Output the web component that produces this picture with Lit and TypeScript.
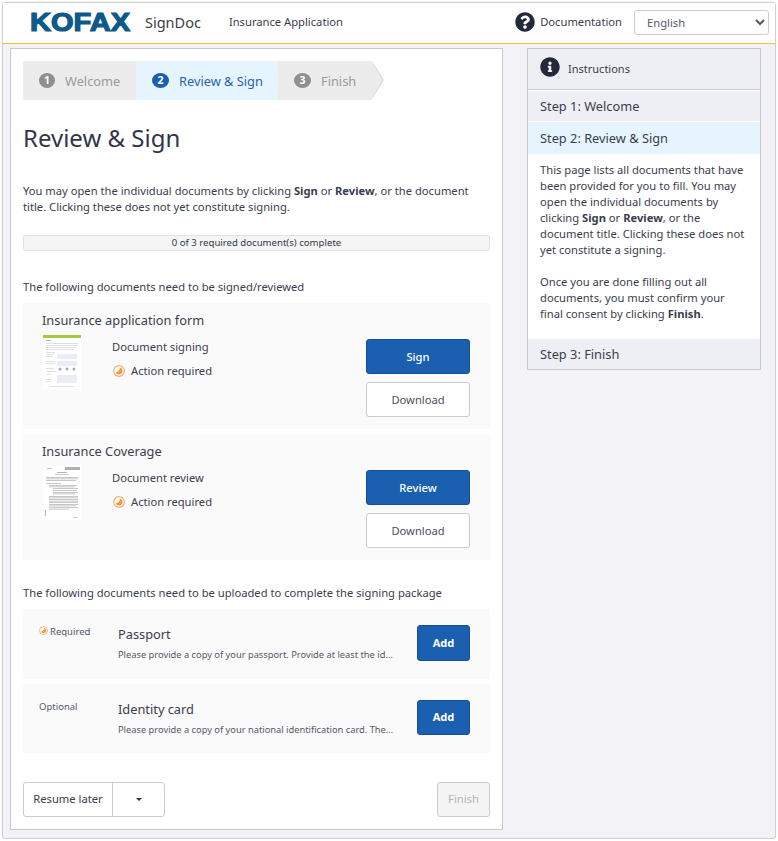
import { LitElement, html, css, svg } from "lit";
import { customElement } from "lit/decorators.js";

const QUESTION = "M504 256c0 136.997-111.043 248-248 248S8 392.997 8 256C8 119.083 119.043 8 256 8s248 111.083 248 248zM262.655 90c-54.497 0-89.255 22.957-116.549 63.758-3.536 5.286-2.353 12.415 2.715 16.258l34.699 26.31c5.205 3.947 12.621 3.008 16.665-2.122 17.864-22.658 30.113-35.797 57.303-35.797 20.429 0 45.698 13.148 45.698 32.958 0 14.976-12.363 22.667-32.534 33.976C247.128 238.528 216 254.941 216 296v4c0 6.627 5.373 12 12 12h56c6.627 0 12-5.373 12-12v-1.333c0-28.462 83.186-29.647 83.186-106.667 0-58.002-60.165-102-116.531-102zM256 338c-25.365 0-46 20.635-46 46 0 25.364 20.635 46 46 46s46-20.636 46-46c0-25.365-20.635-46-46-46z";
const INFO = "M256 8C119.043 8 8 119.083 8 256c0 136.997 111.043 248 248 248s248-111.003 248-248C504 119.083 392.957 8 256 8zm0 110c23.196 0 42 18.804 42 42s-18.804 42-42 42-42-18.804-42-42 18.804-42 42-42zm56 254c0 6.627-5.373 12-12 12h-88c-6.627 0-12-5.373-12-12v-24c0-6.627 5.373-12 12-12h12v-64h-12c-6.627 0-12-5.373-12-12v-24c0-6.627 5.373-12 12-12h64c6.627 0 12 5.373 12 12v100h12c6.627 0 12 5.373 12 12v24z";

const clock = (size: number) => html`<svg width=${size} height=${size} viewBox="0 0 12 12">
  <circle cx="6" cy="6" r="5.3" fill="#fff" stroke="#f9ab78" stroke-width="1.2"></circle>
  <path d="M6.6 2.6 A3.5 3.5 0 1 1 2.7 7.2 A4 4 0 0 0 6.6 4.8 Z" fill="#f29c33"></path>
</svg>`;

const lines = (rows: number[][], fill: string) =>
  rows.map(([x, y, w, h]) => svg`<rect x=${x} y=${y} width=${w} height=${h ?? 0.7} fill=${fill}></rect>`);

const thumbForm = html`<svg class="thumb" width="38" height="54" viewBox="0 0 38 54">
  <rect width="38" height="54" fill="#fff"></rect>
  <rect width="38" height="3" fill="#a6c83c"></rect>
  <rect x="3" y="5" width="5" height="1" fill="#9db9dc"></rect>
  ${lines([[3,8,32,.7],[3,10,32,.7],[3,12,30,.7],[3,14,28,.7],[3,17,9,.7],[3,19,8,.7],[3,21,7,.7],[3,26,9,.7],[3,28,9,.7],[3,33,8,.7],[3,36,10,.7],[3,39,5,.7],[3,44,5,.7],[3,46,4,.7]], "#d0d3d8")}
  ${lines([[14,19,20,5],[14,26,20,5],[14,40,20,4],[14,44,20,4]], "#e9eef6")}
  <circle cx="17" cy="34" r="1.5" fill="#a5aab0"></circle>
  <circle cx="24" cy="34" r="1.5" fill="#a5aab0"></circle>
  <circle cx="31" cy="34" r="1.5" fill="#a5aab0"></circle>
  <rect x="7" y="51" width="24" height=".7" fill="#d5dae0"></rect>
</svg>`;

const thumbDoc = html`<svg class="thumb" width="38" height="54" viewBox="0 0 38 54">
  <rect width="38" height="54" fill="#fff"></rect>
  <rect x="22" y="1" width="15" height="3" fill="#b0b0b0"></rect>
  <rect x="4" y="2" width="5" height=".7" fill="#aaa"></rect>
  <rect x="14" y="6" width="10" height=".7" fill="#999"></rect>
  <rect x="12" y="8" width="14" height=".7" fill="#bbb"></rect>
  ${lines([[3,11,32,.6],[3,12.6,32,.6],[3,14.2,30,.6],[3,17,15,.6],[6,19,28,.6],[6,20.6,26,.6],[10,22.4,25,.6],[10,24,24,.6],[10,26,25,.6],[10,27.6,22,.6],[6,30,29,.6],[6,31.6,29,.6],[6,33.2,29,.6],[6,34.8,29,.6],[6,36.4,29,.6],[6,38,29,.6],[6,39.6,27,.6],[6,41.2,29,.6],[6,42.8,20,.6],[2,44,.8,6],[30,51,4,.6]], "#a2a2a2")}
</svg>`;

@customElement("app-root")
export class AppRoot extends LitElement {
  static styles = css`
    :host { display: block; font-family: "Noto Sans", sans-serif; color: #3a3d4e; font-size: 11.2px; line-height: 16px; }
    * { box-sizing: border-box; }
    .frame { margin: 2px 2px 0 2px; width: 774px; height: 837px; background: #f2f2f7; border: 1px solid #cfcfd4; border-radius: 3px; box-shadow: 0 0 2px rgba(0,0,0,.1); }
    header { height: 41px; background: #fff; border-bottom: 1px solid #f4c02f; display: flex; align-items: center; padding: 0 6px 2px 26px; }
    .logo { display: block; width: 102px; height: 20px; }
    .logo text { font: 900 25px "Liberation Sans", sans-serif; fill: #0d5a8a; stroke: #0d5a8a; stroke-width: 1.2; }
    .brand { font-size: 14.5px; margin-left: 14px; color: #3b3d4a; }
    .app { margin-left: 28px; font-size: 11.2px; }
    .spacer { flex: 1; }
    .doc { display: flex; align-items: center; gap: 5px; font-size: 11.2px; margin-right: 12px; }
    .doc svg, .side-head svg { display: block; fill: #22293a; }
    select { width: 135px; height: 25px; padding-left: 8px; font: 11.2px "Noto Sans", sans-serif; color: #55596a; background: #fff; border: 1px solid #ccc; border-radius: 3px; }
    .body { display: flex; align-items: flex-start; padding: 4px 0 0 7px; }
    main { width: 493px; height: 782px; background: #fff; border: 1px solid #c8c8cc; padding: 12px; display: flex; flex-direction: column; }
    .steps { display: flex; width: 360px; height: 39px; }
    .step { display: flex; align-items: center; height: 39px; background: #ececec; color: #9a9a9a; font-size: 12.8px; padding-left: 16px; position: relative; }
    .step.one { width: 113px; }
    .step.one .num { width: 16px; }
    .step.two { width: 142px; background: #e6f5fd; color: #2a62ad; }
    .step.three { width: 94px; }
    .step.three::before { content: ""; position: absolute; left: 94px; top: 0; width: 0; height: 0; border-left: 12px solid #dcdcdc; border-top: 19.5px solid transparent; border-bottom: 19.5px solid transparent; }
    .step.three::after { content: ""; position: absolute; left: 94px; top: 1px; width: 0; height: 0; border-left: 10.5px solid #ececec; border-top: 18.5px solid transparent; border-bottom: 18.5px solid transparent; }
    .num { width: 17px; height: 15px; border-radius: 50%; background: #8f8f8f; color: #fff; font-size: 10.5px; font-weight: 700; line-height: 15px; text-align: center; margin-right: 10px; }
    .two .num { background: #1a5fb0; }
    h1 { margin: 19px 0 0; font-size: 24px; font-weight: 400; line-height: 38px; color: #33364a; }
    .intro { margin: 26px 0 0; font-size: 11.2px; line-height: 16px; }
    b { font-weight: 700; }
    .progress { height: 16px; flex: none; margin-top: 20px; background: #f5f5f5; border: 1px solid #e3e3e3; border-radius: 2px; text-align: center; font-size: 9.6px; line-height: 14px; color: #33364a; }
    .label { margin: 28px 0 0; font-size: 11.2px; line-height: 16px; }
    .card + .label { margin-top: 25px; }
    .card { background: #fafafa; height: 126px; flex: none; padding: 8px 20px 0 19px; margin-top: 5px; }
    .label + .card { margin-top: 8px; }
    .card h3 { margin: 0; font-size: 12.8px; font-weight: 400; line-height: 18px; color: #3a3d4e; }
    .card-row { display: flex; margin-top: 6px; }
    .thumb { display: block; flex: none; margin-left: 1px; }
    .meta { margin-left: 31px; flex: 1; font-size: 11.2px; line-height: 16px; padding-top: 4px; }
    .action { display: flex; align-items: center; gap: 6px; margin-top: 8px; padding-left: 1px; }
    .action svg { display: block; }
    .actions { display: flex; flex-direction: column; gap: 8px; width: 104px; margin-top: 4px; }
    .btn { height: 35px; flex: none; border-radius: 3px; font: 11.2px "Noto Sans", sans-serif; display: flex; align-items: center; justify-content: center; }
    .primary { background: #1a5fb0; border: 1px solid #154f93; color: #fff; font-weight: 500; }
    .plain { background: #fff; border: 1px solid #ccc; color: #4b4e5c; }
    .upload { background: #fafafa; height: 70px; flex: none; margin-top: 5px; display: flex; padding: 16px 20px 0 16px; }
    .label + .upload { margin-top: 8px; }
    .upload.second { height: 69px; }
    .req { width: 79px; flex: none; display: flex; align-items: flex-start; gap: 2px; font-size: 9.5px; line-height: 14px; color: #55586a; }
    .req svg { margin-top: 1px; }
    .upload-text { width: 276px; flex: none; }
    .upload-text h4 { margin: 0; font-size: 12.8px; font-weight: 400; line-height: 18px; }
    .upload-text p { margin: 5px 0 0; font-size: 9.3px; line-height: 14px; white-space: nowrap; overflow: hidden; text-overflow: ellipsis; color: #55586a; }
    .add { width: 53px; height: 36px; margin-left: auto; font-weight: 700; font-size: 11px; padding-bottom: 2px; }
    .second .add { height: 35px; }
    .foot { display: flex; justify-content: space-between; margin-top: 29px; }
    .split { display: flex; width: 142px; height: 35px; border: 1px solid #ccc; border-radius: 3px; font-size: 11.2px; }
    .split span { display: flex; align-items: center; justify-content: center; }
    .split .txt { width: 89px; border-right: 1px solid #ccc; padding-bottom: 2px; }
    .split .caret { flex: 1; }
    .caret::after { content: ""; border-top: 3px solid #333; border-left: 3px solid transparent; border-right: 3px solid transparent; }
    .finish { width: 53px; background: #f4f4f4; border: 1px solid #ccc; color: #b5b5b5; padding-bottom: 2px; }
    aside { margin-left: 24px; width: 234px; background: #fff; border: 1px solid #c8c8cc; }
    .side-head { height: 41px; background: #eeeff4; display: flex; align-items: center; gap: 8px; padding: 0 12px; font-size: 11px; border-bottom: 1px solid #c9c9ce; }
    .side-head svg { margin-top: -4px; }
    .side-step { height: 30px; background: #eeeff4; display: flex; align-items: center; padding: 0 12px; font-size: 12.8px; color: #3a3d4e; }
    .side-step.first { margin-top: 1px; }
    .side-step.active { background: #e6f5fd; height: 32px; margin-top: 1px; }
    .side-body { padding: 8px 12px 10px; height: 185px; font-size: 11.2px; line-height: 16px; }
    .side-body p { margin: 0 0 16px; }
  `;

  render() {
    return html`<div class="frame">
      <header>
        <svg class="logo" viewBox="0 0 102 20" aria-label="KOFAX"><text x="1" y="18.5" textLength="100" lengthAdjust="spacingAndGlyphs">KOFAX</text></svg>
        <span class="brand">SignDoc</span>
        <span class="app">Insurance Application</span>
        <span class="spacer"></span>
        <span class="doc"><svg width="20" height="20" viewBox="0 0 512 512"><path d=${QUESTION}></path></svg>Documentation</span>
        <select><option>English</option></select>
      </header>
      <div class="body">
        <main>
          <div class="steps">
            <div class="step one"><span class="num">1</span>Welcome</div>
            <div class="step two"><span class="num">2</span>Review &amp; Sign</div>
            <div class="step three"><span class="num">3</span>Finish</div>
          </div>
          <h1>Review &amp; Sign</h1>
          <p class="intro">You may open the individual documents by clicking <b>Sign</b> or <b>Review</b>, or the document title. Clicking these does not yet constitute signing.</p>
          <div class="progress">0 of 3 required document(s) complete</div>
          <p class="label">The following documents need to be signed/reviewed</p>
          <section class="card">
            <h3>Insurance application form</h3>
            <div class="card-row">
              ${thumbForm}
              <div class="meta">Document signing<div class="action">${clock(12)}Action required</div></div>
              <div class="actions"><div class="btn primary">Sign</div><div class="btn plain">Download</div></div>
            </div>
          </section>
          <section class="card">
            <h3>Insurance Coverage</h3>
            <div class="card-row">
              ${thumbDoc}
              <div class="meta">Document review<div class="action">${clock(12)}Action required</div></div>
              <div class="actions"><div class="btn primary">Review</div><div class="btn plain">Download</div></div>
            </div>
          </section>
          <p class="label">The following documents need to be uploaded to complete the signing package</p>
          <section class="upload">
            <div class="req">${clock(9)}Required</div>
            <div class="upload-text"><h4>Passport</h4><p>Please provide a copy of your passport. Provide at least the identification page and the page with the photo</p></div>
            <div class="btn primary add">Add</div>
          </section>
          <section class="upload second">
            <div class="req">Optional</div>
            <div class="upload-text"><h4>Identity card</h4><p>Please provide a copy of your national identification card. The copy must show both the front and the back</p></div>
            <div class="btn primary add">Add</div>
          </section>
          <div class="foot">
            <div class="split"><span class="txt">Resume later</span><span class="caret"></span></div>
            <div class="btn finish">Finish</div>
          </div>
        </main>
        <aside>
          <div class="side-head"><svg width="20" height="20" viewBox="0 0 512 512"><path d=${INFO}></path></svg>Instructions</div>
          <div class="side-step first">Step 1: Welcome</div>
          <div class="side-step active">Step 2: Review &amp; Sign</div>
          <div class="side-body">
            <p>This page lists all documents that have been provided for you to fill. You may open the individual documents by clicking <b>Sign</b> or <b>Review</b>, or the document title. Clicking these does not yet constitute a signing.</p>
            <p>Once you are done filling out all documents, you must confirm your final consent by clicking <b>Finish</b>.</p>
          </div>
          <div class="side-step">Step 3: Finish</div>
        </aside>
      </div>
    </div>`;
  }
}
